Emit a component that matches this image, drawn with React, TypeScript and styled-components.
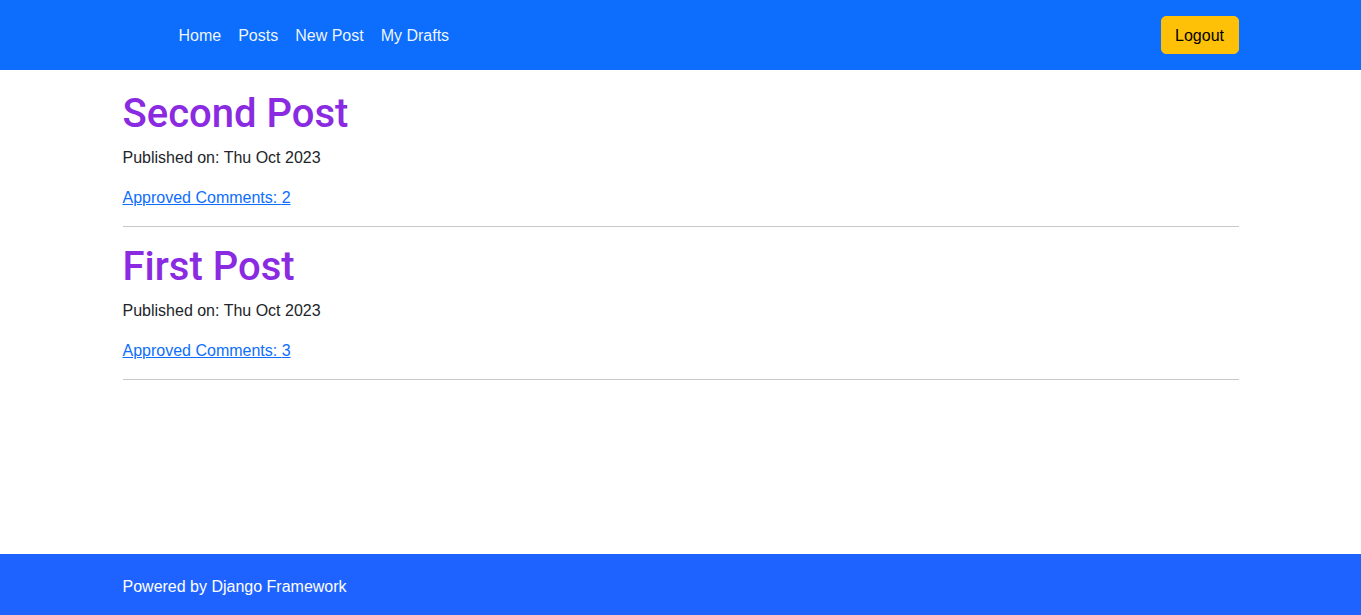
import React from 'react';
import styled, { createGlobalStyle } from 'styled-components';

const GlobalStyle = createGlobalStyle`
  html, body {
    margin: 0;
    padding: 0;
  }
  body {
    font-family: "Liberation Sans", Arial, sans-serif;
    font-size: 16px;
    line-height: 24px;
    color: #212529;
    background: #fff;
  }
`;

const Page = styled.div`
  min-height: 100vh;
  display: flex;
  flex-direction: column;
`;

const Container = styled.div`
  width: 1116px;
  margin: 0 auto;
`;

const Navbar = styled.nav`
  background: #0d6efd;
  height: 70px;
`;

const NavInner = styled(Container)`
  height: 100%;
  display: flex;
  align-items: center;
  justify-content: space-between;
`;

const NavList = styled.ul`
  list-style: none;
  margin: 0;
  padding: 0 0 0 48px;
  display: flex;
  gap: 1px;
`;

const NavLink = styled.a`
  display: block;
  padding: 9px 8px 7px;
  color: rgba(255, 255, 255, 0.95);
  text-decoration: none;
  cursor: pointer;
`;

const LogoutButton = styled.button`
  font: inherit;
  height: 38px;
  padding: 2px 13.5px 0;
  background: #ffc107;
  color: #000;
  border: 1px solid #ffc107;
  border-radius: 5px;
  cursor: pointer;
`;

const Main = styled.main`
  flex: 1;
  padding-top: 20px;
`;

const Post = styled.article`
  & + & {
    margin-top: 16px;
  }
`;

const Title = styled.h1`
  margin: 0 0 8px;
  font-family: Roboto, "Liberation Sans", sans-serif;
  font-size: 40px;
  line-height: 48px;
  font-weight: 500;
  color: #8a2be2;
`;

const Meta = styled.p`
  margin: 0 0 16px;
`;

const CommentsLink = styled.a`
  color: #0d6efd;
  text-decoration: underline;
  cursor: pointer;
`;

const Divider = styled.hr`
  margin: 0;
  border: 0;
  border-top: 1px solid #c8c8c8;
`;

const Footer = styled.footer`
  background: #1e63ff;
  color: #fff;
  padding: 21px 0 16px;
`;

const posts = [
  { title: 'Second Post', date: 'Thu Oct 2023', comments: 2 },
  { title: 'First Post', date: 'Thu Oct 2023', comments: 3 },
];

export default function App() {
  return (
    <Page>
      <GlobalStyle />
      <Navbar>
        <NavInner>
          <NavList>
            <li><NavLink>Home</NavLink></li>
            <li><NavLink>Posts</NavLink></li>
            <li><NavLink>New Post</NavLink></li>
            <li><NavLink>My Drafts</NavLink></li>
          </NavList>
          <LogoutButton>Logout</LogoutButton>
        </NavInner>
      </Navbar>
      <Main>
        <Container>
          {posts.map(p => (
            <Post key={p.title}>
              <Title>{p.title}</Title>
              <Meta>Published on: {p.date}</Meta>
              <Meta><CommentsLink>Approved Comments: {p.comments}</CommentsLink></Meta>
              <Divider />
            </Post>
          ))}
        </Container>
      </Main>
      <Footer>
        <Container>Powered by Django Framework</Container>
      </Footer>
    </Page>
  );
}
